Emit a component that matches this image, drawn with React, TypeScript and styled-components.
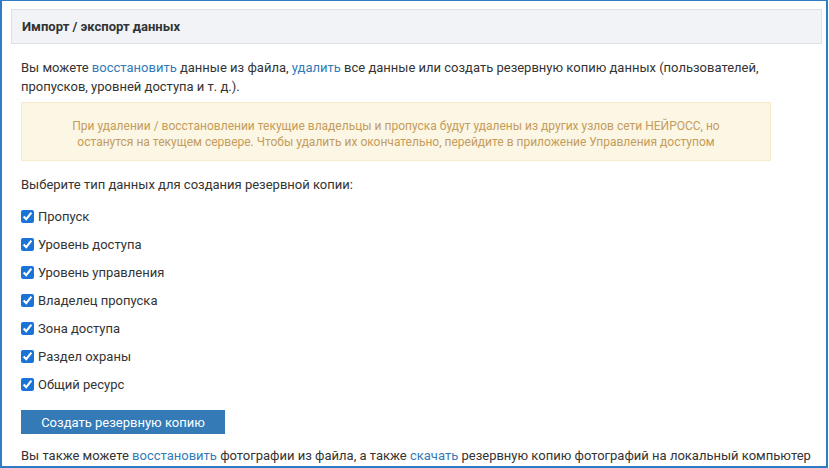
import React from 'react';
import styled, { createGlobalStyle } from 'styled-components';

const GlobalStyle = createGlobalStyle`
  html, body {
    margin: 0;
    padding: 0;
    background: #ffffff;
  }
  body {
    font-family: Roboto, "Liberation Sans", Arial, sans-serif;
    font-size: 13px;
    color: #333333;
  }
`;

const Window = styled.div`
  box-sizing: border-box;
  width: 828px;
  height: 468px;
  border: 2px solid #2f7cc4;
  border-top-width: 1px;
  overflow: hidden;
  padding: 8px 4px 0 9px;
`;

const Panel = styled.section`
  display: flex;
  flex-direction: column;
`;

const PanelHeader = styled.header`
  background: #f1f3f7;
  border: 1px solid #dde2e8;
  height: 35px;
  box-sizing: border-box;
  display: flex;
  align-items: center;
  padding: 0 10px;
  font-weight: 700;
  font-size: 13px;
  color: #333333;
`;

const PanelBody = styled.div`
  padding: 14px 10px 0 10px;
  display: flex;
  flex-direction: column;
`;

const Paragraph = styled.p<{ $top?: number }>`
  margin: ${(p) => p.$top ?? 0}px 0 0 0;
  line-height: 19px;
  font-size: 13px;
`;

const Link = styled.a`
  color: #337ab7;
  text-decoration: none;
`;

const Alert = styled.div`
  margin: 6px 0 0 0;
  width: 750px;
  box-sizing: border-box;
  background: #fcf6e4;
  border: 1px solid #f8eacd;
  color: #c49c5c;
  text-align: center;
  padding: 15px 15px 10px;
  line-height: 16px;
  font-size: 12px;
`;

const CheckList = styled.div`
  display: flex;
  flex-direction: column;
  margin-top: 8px;
`;

const CheckRow = styled.label`
  display: flex;
  align-items: center;
  height: 28px;
  gap: 4px;
  cursor: pointer;
`;

const Box = styled.input.attrs({ type: 'checkbox' })`
  width: 13px;
  height: 13px;
  margin: 0;
  accent-color: #1a73d6;
`;

const Button = styled.button`
  margin-top: 12px;
  width: 204px;
  height: 24px;
  border: none;
  background: #337ab7;
  color: #ffffff;
  font-family: Roboto, "Liberation Sans", Arial, sans-serif;
  font-size: 13px;
  padding: 0;
  cursor: pointer;
`;

const types = [
  'Пропуск',
  'Уровень доступа',
  'Уровень управления',
  'Владелец пропуска',
  'Зона доступа',
  'Раздел охраны',
  'Общий ресурс',
];

export default function App() {
  return (
    <>
      <GlobalStyle />
      <Window>
        <Panel>
          <PanelHeader>Импорт / экспорт данных</PanelHeader>
          <PanelBody>
            <Paragraph>
              Вы можете <Link href="#">восстановить</Link> данные из файла, <Link href="#">удалить</Link> все
              данные или создать резервную копию данных (пользователей, пропусков, уровней доступа и т. д.).
            </Paragraph>
            <Alert>
              При удалении / восстановлении текущие владельцы и пропуска будут удалены из других узлов сети
              НЕЙРОСС, но
              <br />
              останутся на текущем сервере. Чтобы удалить их окончательно, перейдите в приложение Управления
              доступом
            </Alert>
            <Paragraph $top={14}>Выберите тип данных для создания резервной копии:</Paragraph>
            <CheckList>
              {types.map((t) => (
                <CheckRow key={t}>
                  <Box defaultChecked />
                  {t}
                </CheckRow>
              ))}
            </CheckList>
            <Button>Создать резервную копию</Button>
            <Paragraph $top={12}>
              Вы также можете <Link href="#">восстановить</Link> фотографии из файла, а также{' '}
              <Link href="#">скачать</Link> резервную копию фотографий на локальный компьютер
            </Paragraph>
          </PanelBody>
        </Panel>
      </Window>
    </>
  );
}
